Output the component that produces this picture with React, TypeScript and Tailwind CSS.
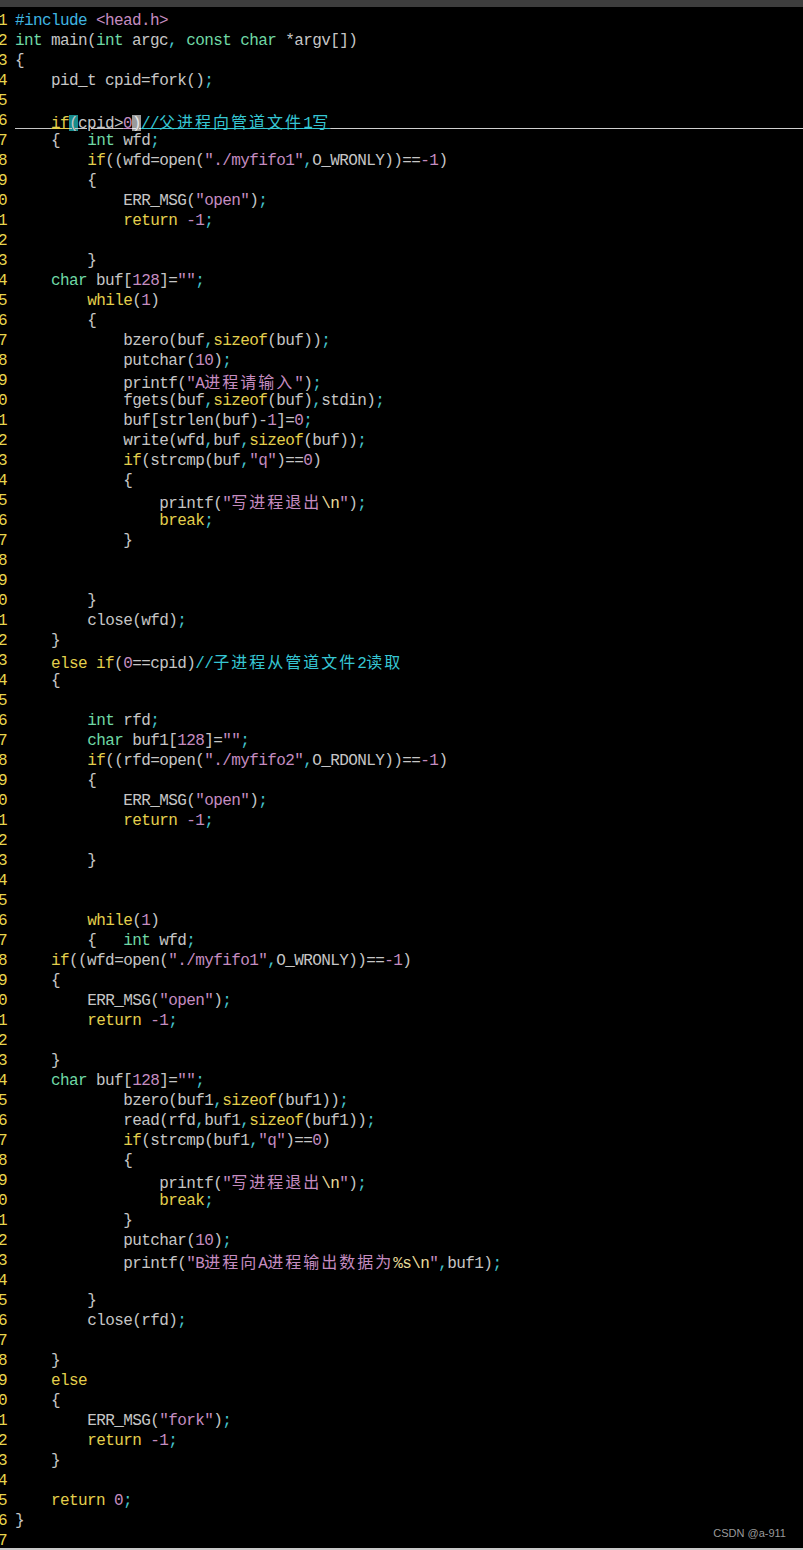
import React from 'react';

const code = [
  '#include <head.h>',
  'int main(int argc, const char *argv[])',
  '{',
  '    pid_t cpid=fork();',
  '',
  '__CURSOR__',
  '    {   int wfd;',
  '        if((wfd=open("./myfifo1",O_WRONLY))==-1)',
  '        {',
  '            ERR_MSG("open");',
  '            return -1;',
  '',
  '        }',
  '    char buf[128]="";',
  '        while(1)',
  '        {',
  '            bzero(buf,sizeof(buf));',
  '            putchar(10);',
  '            printf("A进程请输入");',
  '            fgets(buf,sizeof(buf),stdin);',
  '            buf[strlen(buf)-1]=0;',
  '            write(wfd,buf,sizeof(buf));',
  '            if(strcmp(buf,"q")==0)',
  '            {',
  '                printf("写进程退出\\n");',
  '                break;',
  '            }',
  '',
  '',
  '        }',
  '        close(wfd);',
  '    }',
  '    else if(0==cpid)//子进程从管道文件2读取',
  '    {',
  '',
  '        int rfd;',
  '        char buf1[128]="";',
  '        if((rfd=open("./myfifo2",O_RDONLY))==-1)',
  '        {',
  '            ERR_MSG("open");',
  '            return -1;',
  '',
  '        }',
  '',
  '',
  '        while(1)',
  '        {   int wfd;',
  '    if((wfd=open("./myfifo1",O_WRONLY))==-1)',
  '    {',
  '        ERR_MSG("open");',
  '        return -1;',
  '',
  '    }',
  '    char buf[128]="";',
  '            bzero(buf1,sizeof(buf1));',
  '            read(rfd,buf1,sizeof(buf1));',
  '            if(strcmp(buf1,"q")==0)',
  '            {',
  '                printf("写进程退出\\n");',
  '                break;',
  '            }',
  '            putchar(10);',
  '            printf("B进程向A进程输出数据为%s\\n",buf1);',
  '',
  '        }',
  '        close(rfd);',
  '',
  '    }',
  '    else',
  '    {',
  '        ERR_MSG("fork");',
  '        return -1;',
  '    }',
  '',
  '    return 0;',
  '}',
  '',
];

const C = {
  def: 'text-[#c6c6c6]',
  kw: 'text-[#e3cf4c]',
  ty: 'text-[#6fd8a5]',
  str: 'text-[#c58cc0]',
  cm: 'text-[#36c6d3]',
  pp: 'text-[#3fb5e0]',
  pu: 'text-[#45c3cc]',
  esc: 'text-[#e9dc9a]',
};

const keywords = ['if', 'else', 'while', 'return', 'break', 'sizeof'];
const types = ['int', 'char', 'const'];

type Tok = { text: string; cls: string };

function tokenize(line: string): Tok[] {
  const out: Tok[] = [];
  const re = /(\/\/.*$)|("(?:[^"\\]|\\.)*")|(<head\.h>)|(#include)|((?<=[\s=])-\d+|\b\d+\b)|([A-Za-z_]\w*)|([;,])|([^])/g;
  let m: RegExpExecArray | null;
  while ((m = re.exec(line))) {
    if (m[1]) out.push({ text: m[1], cls: C.cm });
    else if (m[2]) {
      // split escapes / format specifiers out of the string
      m[2].split(/(\\n|%s)/).forEach((p) => {
        if (!p) return;
        out.push({ text: p, cls: p === '\\n' || p === '%s' ? C.esc : C.str });
      });
    } else if (m[3]) out.push({ text: m[3], cls: C.str });
    else if (m[4]) out.push({ text: m[4], cls: C.pp });
    else if (m[5]) out.push({ text: m[5], cls: C.str });
    else if (m[6]) {
      const w = m[6];
      out.push({ text: w, cls: keywords.includes(w) ? C.kw : types.includes(w) ? C.ty : C.def });
    } else if (m[7]) out.push({ text: m[7], cls: C.pu });
    else out.push({ text: m[0], cls: C.def });
  }
  return out;
}

function Seg({ text, cls, extra = '' }: { text: string; cls: string; extra?: string }) {
  const parts = text.split(/([\u3000-\u9fff\uff00-\uffef]+)/);
  return (
    <>
      {parts.map((p, i) =>
        !p ? null : i % 2 === 1 ? (
          <span
            key={i}
            className={`${cls} ${extra} font-['Noto_Sans_CJK_SC','Noto_Sans',sans-serif] text-[16px] tracking-[2px]`}
          >
            {p}
          </span>
        ) : (
          <span key={i} className={`${cls} ${extra}`}>
            {p}
          </span>
        )
      )}
    </>
  );
}

function CursorLine() {
  const u = 'underline decoration-1 underline-offset-0';
  return (
    <>
      <Seg text="    " cls={C.def} extra={u} />
      <Seg text="if" cls={C.kw} extra={u} />
      <span className={`${C.def} ${u} bg-[#178c8c]`}>(</span>
      <Seg text="cpid>" cls={C.def} extra={u} />
      <Seg text="0" cls={C.str} extra={u} />
      <span className={`text-[#e8e8e8] ${u} bg-[#9a9a9a]`}>)</span>
      <Seg text="//父进程向管道文件1写" cls={C.cm} extra={u} />
      <Seg text={' '.repeat(90)} cls="text-[#d0d0d0]" extra={u} />
    </>
  );
}

export default function App() {
  return (
    <div className="relative w-[803px] h-[1550px] overflow-hidden bg-black">
      <div className="h-[7px] bg-[#3d3d3d]" />
      <div className="pt-[4px] font-['Liberation_Mono',monospace] text-[16px] tracking-[-0.6px] leading-[20px] whitespace-pre">
        {code.map((line, i) => (
          <div key={i} className="flex h-5 overflow-hidden">
            <span className="w-[27px] ml-[-20px] shrink-0 text-right text-[#e8d44d]">{i + 1}</span>
            <div className="pl-[8px] flex-1 overflow-hidden">
              {line === '__CURSOR__' ? (
                <CursorLine />
              ) : (
                tokenize(line).map((t, j) => <Seg key={j} text={t.text} cls={t.cls} />)
              )}
            </div>
          </div>
        ))}
      </div>
      <div className="absolute bottom-0 left-0 right-0 h-[2px] bg-[#c8c8c8]" />
      <div className="absolute right-[17px] bottom-[9px] font-['Liberation_Sans',sans-serif] text-[11px] text-[#9a9a9a]">
        CSDN @a-911
      </div>
    </div>
  );
}
